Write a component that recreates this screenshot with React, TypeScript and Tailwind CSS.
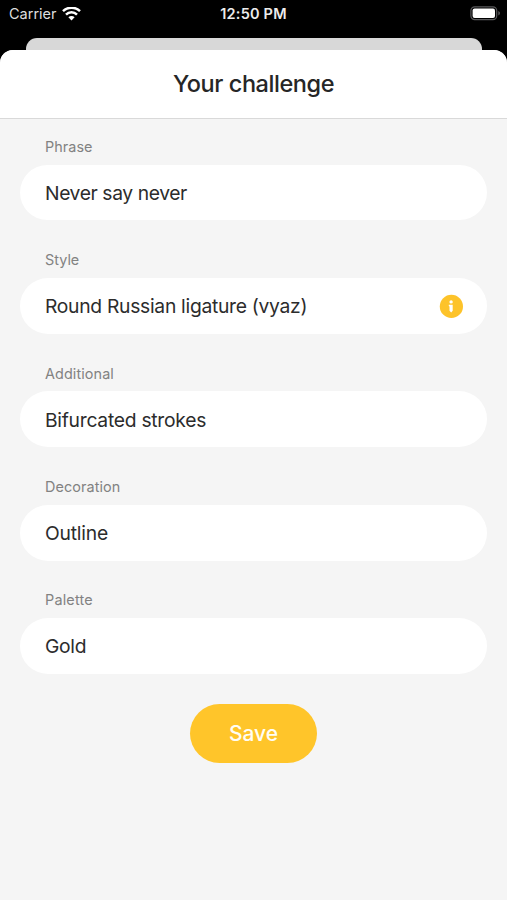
type FieldProps = {
  label: string;
  value: string;
  labelClass: string;
  valueClass: string;
  info?: boolean;
};

const fields: FieldProps[] = [
  { label: "Phrase", value: "Never say never", labelClass: "tracking-[0.05px]", valueClass: "tracking-[-0.4px]" },
  { label: "Style", value: "Round Russian ligature (vyaz)", labelClass: "tracking-[0px]", valueClass: "tracking-[-0.29px]", info: true },
  { label: "Additional", value: "Bifurcated strokes", labelClass: "tracking-[0.1px]", valueClass: "tracking-[-0.27px]" },
  { label: "Decoration", value: "Outline", labelClass: "tracking-[0.1px]", valueClass: "tracking-[-0.2px]" },
  { label: "Palette", value: "Gold", labelClass: "tracking-[0.2px]", valueClass: "tracking-[-0.3px]" },
];

function WifiIcon() {
  return (
    <svg width="19" height="15" viewBox="0 0 19 15" fill="none" stroke="#fff" strokeWidth="2.5">
      <path d="M1 4.2a12.1 12.1 0 0 1 17 0" />
      <path d="M4 7.6a7.7 7.7 0 0 1 11 0" />
      <path d="M6.4 10.3a4.3 4.3 0 0 1 6.2 0L9.5 13.4z" fill="#fff" stroke="none" />
    </svg>
  );
}

function BatteryIcon() {
  return (
    <svg width="31" height="15" viewBox="0 0 31 15">
      <rect x="0.9" y="0.8" width="25.8" height="12.8" rx="3.8" fill="none" stroke="#59595b" strokeWidth="1.2" />
      <rect x="2.6" y="2.5" width="22.4" height="9.4" rx="2" fill="#fff" />
      <path d="M28.3 5c2.2.8 2.2 3.6 0 4.4z" fill="#59595b" />
    </svg>
  );
}

function InfoIcon() {
  return (
    <svg width="24" height="24" viewBox="0 0 24 24">
      <circle cx="12.4" cy="12.4" r="11.6" fill="#fdc32a" />
      <circle cx="12.1" cy="7.9" r="1.7" fill="#fff" />
      <path d="M9.8 10.8h3.9v6l-1.5 1.8-1.7-1.8v-4.3l-.7-.5z" fill="#fff" />
    </svg>
  );
}

function Field({ label, value, labelClass, valueClass, info }: FieldProps) {
  return (
    <div className="h-[113.4px]">
      <div className={`h-[27.8px] pl-[25px] text-[14.4px] leading-5 text-[#828282] ${labelClass}`}>{label}</div>
      <div className="flex h-[55.7px] items-center justify-between rounded-full bg-white pr-[24px] pl-[25px] text-[19.3px] text-[#2c2c2c]">
        <span className={`pt-[1.6px] ${valueClass}`}>{value}</span>
        {info && <InfoIcon />}
      </div>
    </div>
  );
}

export default function App() {
  return (
    <div className="flex h-[900px] w-[507px] flex-col overflow-hidden bg-black font-['Inter',sans-serif]">
      <div className="grid h-[38px] grid-cols-3 items-start pt-[6px] text-white">
        <div className="flex items-center gap-[5px] pl-[9px]">
          <span className="text-[14.5px] leading-4 tracking-[0px] text-[#dedede]">Carrier</span>
          <WifiIcon />
        </div>
        <div className="text-center text-[14.5px] leading-4 font-semibold tracking-[0.2px] text-[#ececec]">12:50 PM</div>
        <div className="flex justify-end pr-[6px]">
          <BatteryIcon />
        </div>
      </div>
      <div className="mx-[25.5px] h-3 shrink-0 rounded-t-[11px] bg-[#d8d8d8]" />
      <div className="flex flex-1 flex-col overflow-hidden rounded-t-[13px] bg-[#f5f5f5]">
        <h1 className="flex h-[69px] shrink-0 items-center justify-center border-b border-[#d9d9d9] bg-white text-[23.5px] font-medium tracking-[-0.44px] text-[#262626]">
          Your challenge
        </h1>
        <main className="flex flex-col px-5 pt-[17.9px]">
          {fields.map((f) => (
            <Field key={f.label} {...f} />
          ))}
          <button className="mt-[0.4px] h-[59px] w-[127.5px] self-center rounded-full bg-[#ffc52a] pt-px text-[21px] font-medium tracking-[-0.1px] text-[#fffdf5]">
            Save
          </button>
        </main>
      </div>
    </div>
  );
}
